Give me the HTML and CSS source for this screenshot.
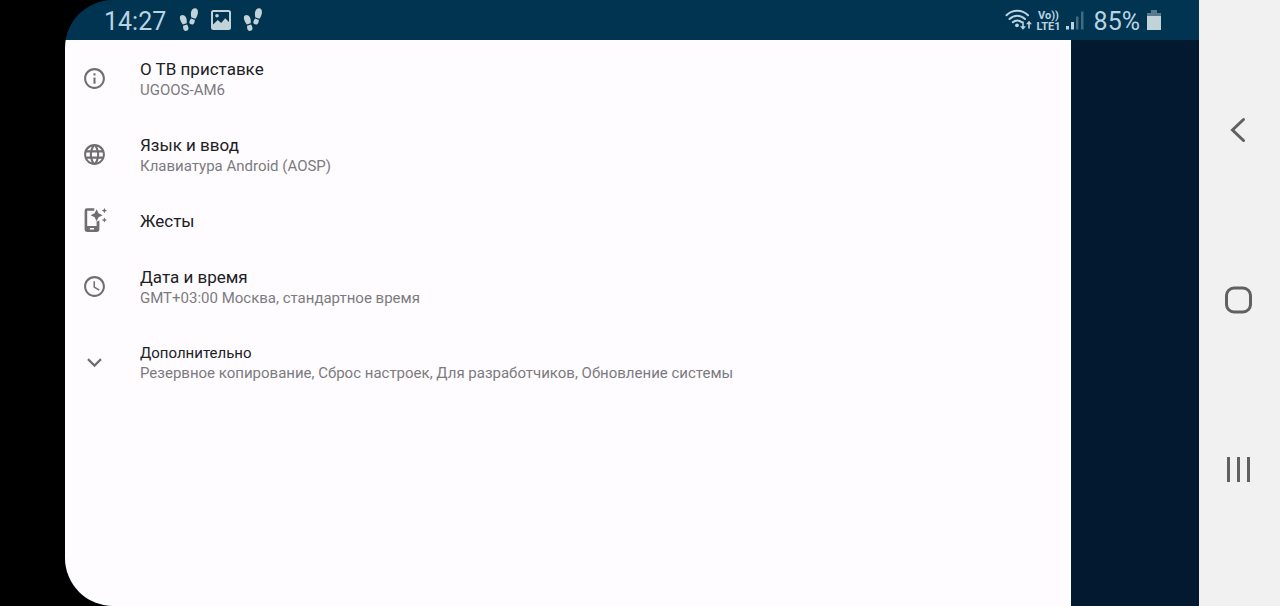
FILE: index.html
```html
<!DOCTYPE html>
<html lang="ru">
<head>
<meta charset="utf-8">
<meta name="viewport" content="width=device-width, initial-scale=1">
<title>Настройки</title>
<link rel="stylesheet" href="styles.css">
</head>
<body>
<svg class="defs" aria-hidden="true">
  <symbol id="steps" viewBox="0 0 20 26">
    <path d="M1.200 8.200C2.600 6.800 5.200 7.600 6.500 9.800c1.200 2.100 1.300 4.300 1 6.700L3.200 17.900C1.700 15.900.5 13.700.2 11.500c-.2-1.400.1-2.500 1-3.300z"/>
    <path d="M3.600 19.200l4.300-1.300c1 2 2 3.500 1.400 5.200-.6 1.700-3.300 2.400-4.600 1.100-1.100-1.200-1.200-3.100-1.100-5z"/>
    <path d="M16.200.2c2.400-.4 3.600 1.800 3.500 4.400-.1 2.500-1.100 4.900-2.600 7L12.600 10.200c-.7-2.400-.8-4.900 0-7C13.300 1.500 14.600.4 16.200.2z"/>
    <path d="M12.200 11.400l4.300 1.500c-.5 1.700-.5 3.300-1.600 4.400-1.200 1.100-3.800.6-4.400-1-.6-1.600.8-3.300 1.700-4.900z"/>
  </symbol>
</svg>
<div class="device">
  <div class="screen">
    <header class="status">
      <div class="status-left">
        <time class="clock">14:27</time>
        <svg class="steps" aria-hidden="true"><use href="#steps"/></svg>
        <svg class="picture" viewBox="0 0 20 20" aria-hidden="true"><path fill-rule="evenodd" d="M2.500 0h15A2.500 2.500 0 0 1 20 2.500v15a2.500 2.500 0 0 1-2.500 2.500h-15A2.500 2.500 0 0 1 0 17.500v-15A2.500 2.500 0 0 1 2.500 0zM2 2v12.500l4.800-4.500 3.400 3 4-4.700L18 12V2zM6 4a1.800 1.800 0 1 1 0 3.600A1.800 1.800 0 0 1 6 4z"/></svg>
        <svg class="steps" aria-hidden="true"><use href="#steps"/></svg>
      </div>
      <div class="status-right">
        <svg class="wifi" viewBox="0 0 28 22" aria-hidden="true">
          <g fill="none" stroke="currentColor" stroke-width="2" stroke-linecap="round">
            <path d="M1.500 6.200c6-6 15.500-6 21.500 0M4.500 10c4.500-4.300 11-4.300 15.500 0M7.800 13.300c2.500-2.500 6.400-2.500 9 0"/>
          </g>
          <circle cx="12" cy="16.300" r="1.900"/>
          <path d="M17.200 12.500h1.600v4.800h2.200l-3 3.500-3-3.500h2.200zM23.200 19.500h1.600v-4.300H27l-3-3.500-3 3.500h2.200z"/>
        </svg>
        <span class="volte"><span>Vo))</span><span>LTE1</span></span>
        <svg class="signal" viewBox="0 0 18 20" aria-hidden="true"><path d="M0 16h3v3.500H0zM5 12h3v7.500H5z"/><path opacity=".35" d="M10 6.500h2.500v13H10zM15 1.500h2.500v18H15z"/></svg>
        <span class="percent">85%</span>
        <svg class="battery" viewBox="0 0 14 21" aria-hidden="true"><path opacity=".45" d="M4 0h6v3h4v3H0V3h4z"/><path d="M0 6h14v14H0z"/></svg>
      </div>
    </header>
    <main class="content">
      <ul class="list">
        <li><a class="row" href="#about">
          <svg class="icon" viewBox="0 0 24 24" aria-hidden="true"><path d="M11 7h2v2h-2zm0 4h2v6h-2zm1-9C6.480 2 2 6.480 2 12s4.480 10 10 10 10-4.480 10-10S17.520 2 12 2zm0 18c-4.410 0-8-3.590-8-8s3.590-8 8-8 8 3.590 8 8-3.590 8-8 8z"/></svg>
          <span class="text"><span class="title">О ТВ приставке</span><span class="summary">UGOOS-AM6</span></span>
        </a></li>
        <li><a class="row" href="#language">
          <svg class="icon" viewBox="0 0 24 24" aria-hidden="true"><path d="M11.990 2C6.470 2 2 6.480 2 12s4.470 10 9.990 10C17.520 22 22 17.520 22 12S17.520 2 11.990 2zm6.930 6h-2.950c-.32-1.250-.78-2.450-1.380-3.560 1.840.63 3.370 1.910 4.330 3.560zM12 4.040c.83 1.200 1.480 2.530 1.910 3.960h-3.820c.43-1.430 1.080-2.760 1.910-3.960zM4.260 14C4.100 13.360 4 12.690 4 12s.1-1.360.26-2h3.380c-.08.66-.14 1.320-.14 2s.06 1.340.14 2H4.260zm.82 2h2.950c.32 1.250.78 2.450 1.380 3.560-1.840-.63-3.370-1.900-4.330-3.560zm2.950-8H5.080c.96-1.660 2.490-2.930 4.330-3.560C8.810 5.550 8.350 6.750 8.030 8zM12 19.960c-.83-1.200-1.480-2.530-1.910-3.960h3.820c-.43 1.430-1.080 2.760-1.910 3.960zM14.340 14H9.660c-.09-.66-.16-1.320-.16-2s.07-1.350.16-2h4.680c.09.65.16 1.320.16 2s-.07 1.340-.16 2zm.25 5.560c.6-1.110 1.060-2.310 1.380-3.560h2.950c-.96 1.650-2.490 2.930-4.330 3.560zM16.360 14c.08-.66.14-1.320.14-2s-.06-1.340-.14-2h3.380c.16.64.26 1.310.26 2s-.1 1.360-.26 2h-3.380z"/></svg>
          <span class="text"><span class="title">Язык и ввод</span><span class="summary">Клавиатура Android (AOSP)</span></span>
        </a></li>
        <li><a class="row row-single" href="#gestures">
          <svg class="icon" viewBox="0 0 24 24" aria-hidden="true"><path fill-rule="evenodd" d="M4.800.3h7v2.400H5V17.300h9V13l2.700-1v8.700a2.300 2.300 0 0 1-2.300 2.300H4.800a2.300 2.300 0 0 1-2.300-2.300V2.600A2.300 2.300 0 0 1 4.800.3zM7.500 19.300v1.400h4v-1.400z"/><path d="M14 1.200l1.900 3.900L19.800 7l-3.900 1.900L14 12.800l-1.900-3.900L8.200 7l3.900-1.900zM21.500 0l.8 1.700 1.700.8-1.700.8-.8 1.700-.8-1.700-1.700-.8 1.700-.8zM21.500 9l.8 1.700 1.700.8-1.700.8-.8 1.700-.8-1.700-1.700-.8 1.700-.8z"/></svg>
          <span class="text"><span class="title">Жесты</span></span>
        </a></li>
        <li><a class="row" href="#datetime">
          <svg class="icon" viewBox="0 0 24 24" aria-hidden="true"><path d="M11.990 2C6.470 2 2 6.480 2 12s4.470 10 9.990 10C17.520 22 22 17.520 22 12S17.520 2 11.990 2zM12 20c-4.420 0-8-3.580-8-8s3.580-8 8-8 8 3.580 8 8-3.580 8-8 8zm.5-13H11v6l5.250 3.150.75-1.230-4.500-2.670z"/></svg>
          <span class="text"><span class="title">Дата и время</span><span class="summary">GMT+03:00 Москва, стандартное время</span></span>
        </a></li>
        <li><button class="row" type="button">
          <svg class="icon" viewBox="0 0 24 24" aria-hidden="true"><path d="M6.500 8L12 13.400 17.500 8 19 9.500l-7 7-7-7z"/></svg>
          <span class="text"><span class="title title-small">Дополнительно</span><span class="summary">Резервное копирование, Сброс настроек, Для разработчиков, Обновление системы</span></span>
        </button></li>
      </ul>
    </main>
  </div>
  <nav class="nav" aria-label="Навигация">
    <button type="button" aria-label="Назад"><svg viewBox="0 0 28 28"><path d="M19.500 3.500L8.500 14l11 10.500"/></svg></button>
    <button type="button" aria-label="Домой"><svg viewBox="0 0 28 28"><rect x="2.500" y="2" width="24" height="24" rx="7.500"/></svg></button>
    <button type="button" aria-label="Недавние"><svg viewBox="0 0 28 28"><path stroke-linecap="butt" d="M4.500 1v25M14.500 1v25M24.500 1v25"/></svg></button>
  </nav>
</div>
</body>
</html>
```

FILE: styles.css
```css
* {
  box-sizing: border-box;
}

body {
  margin: 0;
  font-family: Roboto, "Noto Sans", sans-serif;
  background: #000;
}

button {
  border: 0;
  background: none;
  font: inherit;
  cursor: pointer;
}

.defs {
  position: absolute;
  width: 0;
  height: 0;
}

.device {
  display: flex;
  min-height: 100vh;
  padding-left: 65px;
}

.screen {
  flex: 1;
  display: flex;
  flex-direction: column;
  overflow: hidden;
  border-radius: 48px 0 0 48px;
  background: #03192f;
}

.status {
  display: flex;
  align-items: center;
  justify-content: space-between;
  height: 40px;
  padding: 0 38px 0 39px;
  background: #003450;
  color: #b9d3e2;
}

.status svg {
  fill: currentColor;
}

.status-left,
.status-right {
  display: flex;
  align-items: center;
}

.clock,
.percent {
  font-size: 25px;
  line-height: 40px;
  padding-top: 3px;
}

.clock {
  margin-right: 13px;
}

.status .steps,
.status .picture,
.status .battery {
  fill: #c2d2d9;
}

.steps {
  width: 20px;
  height: 24px;
}

.picture {
  width: 20px;
  height: 20px;
  margin: 0 12px;
}

.wifi {
  width: 28px;
  height: 22px;
  margin-right: 4px;
}

.volte {
  display: flex;
  flex-direction: column;
  align-items: center;
  padding-top: 2px;
  font-size: 11px;
  font-weight: 700;
  line-height: 11px;
  margin-right: 5px;
}

.signal {
  width: 18px;
  height: 20px;
  margin-right: 10px;
}

.percent {
  margin-right: 7px;
}

.battery {
  width: 14px;
  height: 21px;
}

.content {
  flex: 1;
  margin-right: 128px;
  background: #fffcff;
}

.list {
  margin: 0;
  padding: 0;
  list-style: none;
}

.row {
  display: flex;
  align-items: center;
  gap: 33px;
  width: 100%;
  min-height: 76px;
  padding: 0 17px;
  color: #202124;
  text-align: left;
  text-decoration: none;
}

.row-single {
  min-height: 56px;
}

.icon {
  flex: none;
  width: 25px;
  height: 25px;
  fill: #6f6f72;
}

.text {
  display: flex;
  flex-direction: column;
  padding-top: 2px;
}

.title {
  font-size: 17px;
  line-height: 22px;
}

.title-small {
  font-size: 15px;
  line-height: 20px;
}

.summary {
  font-size: 15px;
  line-height: 20px;
  color: #7b7b7e;
}

.nav {
  display: flex;
  flex-direction: column;
  width: 81px;
  padding: 45px 3px 51px 0;
  background: #f1f1f1;
}

.nav button {
  flex: 1;
  display: flex;
  align-items: center;
  justify-content: center;
  padding: 0;
}

.nav svg {
  width: 28px;
  height: 28px;
  fill: none;
  stroke: #606060;
  stroke-width: 3;
  stroke-linecap: round;
}
```
